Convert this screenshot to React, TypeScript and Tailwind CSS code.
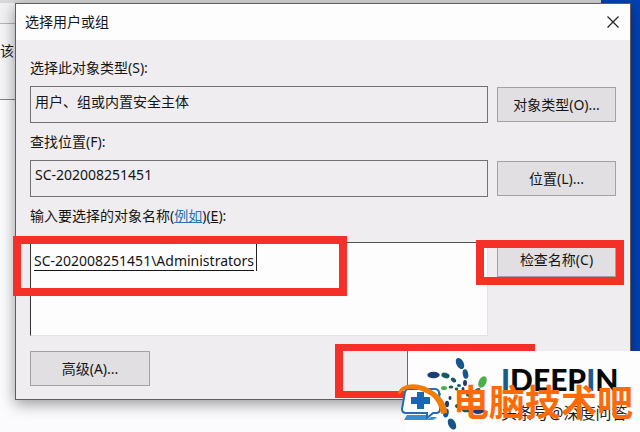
import { useState } from "react";

const BUTTON = "h-[35px] w-full border border-[#a3a1a3] bg-[#e1dfe1] text-sm leading-5 text-[#151515]";
const FIELD = "block h-[37px] w-full min-w-0 border border-[#737173] bg-[#efedef] px-1 pb-2 text-sm leading-5 text-[#151515] outline-none";

function FieldRow({ id, label, value, action }: { id: string; label: string; value: string; action: string }) {
  return (
    <div>
      <label htmlFor={id} className="block text-sm leading-5">{label}</label>
      <div className="mt-2 grid grid-cols-[1fr_119px] items-center gap-[9px]">
        <input id={id} type="text" readOnly value={value} className={FIELD} />
        <button type="button" className={BUTTON}>{action}</button>
      </div>
    </div>
  );
}

// red frame drawn round a control
function Mark({ className }: { className: string }) {
  return <div className={`pointer-events-none absolute border-[#f53029] ${className}`} />;
}

function CloseIcon() {
  return (
    <svg className="h-3 w-3" viewBox="0 0 12 12" fill="none" stroke="#222" strokeWidth={1.2}>
      <path d="M0.5 0.5 11.5 11.5M11.5 0.5 0.5 11.5" />
    </svg>
  );
}

function SwirlLogo() {
  return (
    <svg className="absolute left-[20px] top-[4px] h-[76px] w-[70px]" viewBox="0 0 70 76">
      <g fill="#17568b">
        <ellipse cx="33" cy="8.5" rx="3.6" ry="6" transform="rotate(-28 33 8.5)" />
        <ellipse cx="38.5" cy="19" rx="2.7" ry="4.8" transform="rotate(-10 38.5 19)" />
        <ellipse cx="38" cy="28" rx="2" ry="3" fill="#1c3c78" />
        <ellipse cx="36" cy="34" rx="1.5" ry="2" fill="#1c3c78" />
        <ellipse cx="25" cy="69" rx="3.6" ry="6" transform="rotate(-28 25 69)" />
        <ellipse cx="19" cy="58" rx="2.7" ry="4.6" transform="rotate(10 19 58)" />
        <ellipse cx="20" cy="49" rx="2" ry="3.2" fill="#1c3c78" />
        <ellipse cx="23" cy="43" rx="1.5" ry="2" fill="#1c3c78" />
      </g>
      <g fill="#1c3c78">
        <ellipse cx="6.5" cy="20" rx="6.2" ry="3.3" />
        <ellipse cx="18.5" cy="20.5" rx="4.2" ry="2.6" fill="#17575f" transform="rotate(18 18.5 20.5)" />
        <ellipse cx="26.5" cy="25" rx="3" ry="2" fill="#17575f" transform="rotate(35 26.5 25)" />
        <ellipse cx="32" cy="30.5" rx="2" ry="1.5" fill="#17575f" />
        <ellipse cx="51" cy="56" rx="6" ry="3" />
        <ellipse cx="39" cy="55" rx="4" ry="2.3" fill="#17575f" />
        <ellipse cx="31" cy="51" rx="3" ry="2" fill="#17575f" />
      </g>
      <g fill="#4daf4a">
        <ellipse cx="55.5" cy="27" rx="3.8" ry="6.2" transform="rotate(25 55.5 27)" />
        <ellipse cx="50" cy="36" rx="2.2" ry="4" transform="rotate(48 50 36)" fill="#2c7a4b" />
        <ellipse cx="42" cy="40" rx="3" ry="1.7" fill="#205c4c" />
        <ellipse cx="17" cy="33" rx="3" ry="2" />
        <ellipse cx="24" cy="32" rx="2.4" ry="1.6" fill="#205c4c" />
        <ellipse cx="29.5" cy="34" rx="1.8" ry="1.4" fill="#205c4c" />
        <ellipse cx="11" cy="39" rx="3" ry="2" />
      </g>
    </svg>
  );
}

function RepairIcon() {
  return (
    <svg className="absolute -left-[9px] top-[32px] h-[40px] w-[52px]" viewBox="0 0 52 40">
      <path d="M10 6h27q3 0 4 3l1 17q0 4-4 4h-3l-6 5v-5H8q-4 0-4-4L7 9q1-3 3-3Z" fill="#fff" stroke="#246cb5" strokeWidth="2" />
      <path d="M9 32h19v5l5-3h6q-2 3-6 3H6Z" fill="#368fd3" />
      <path d="M19 9h7v5h6v7h-6v5h-7v-5h-6v-7h6Z" fill="#1668b4" />
      <path d="M0 10C3 0 18-1 30 5c12 6 19 15 19 25l-6 1C41 20 36 13 26 9 16 5 7 4 2 11Z" fill="#f27c08" />
    </svg>
  );
}

function Watermark() {
  return (
    <div className="absolute bottom-0 right-0 h-[81px] w-[233px] bg-[#fdfdfe]">
      <div className="h-[42px] w-px bg-[#3674ad]" />
      <SwirlLogo />
      <p className="absolute left-[94px] top-[10px] font-['Lato',sans-serif] text-[30px] font-black leading-9 text-[#080808]">
        <span className="text-[#175d8c]">I</span>DEEP<span className="text-[#175d8c]">I</span>N
      </p>
      <p className="absolute left-[94px] top-[52px] whitespace-nowrap text-base leading-5 text-[#222]">头条号@深度问答</p>
      <RepairIcon />
      <p className="absolute left-[46px] top-[34px] whitespace-nowrap text-[36px] font-bold leading-9 text-[#ff6a08]">电脑技术吧</p>
    </div>
  );
}

export default function App() {
  const [names, setNames] = useState("SC-202008251451\\Administrators");

  return (
    <main className="relative grid min-h-screen grid-cols-[1fr_39px] overflow-hidden bg-[#fbfafc] font-['Noto_Sans','Noto_Sans_CJK_SC',sans-serif] text-sm text-[#151515]">
      <div className="col-start-1 row-start-1 border-t-[3px] border-[#d8d7d9]">
        <div className="h-[21px] border-b border-[#b5b3b5] bg-[#f1f0f2]" />
        <div className="h-[76px] border-b border-[#858385] bg-[#f5f4f6] pt-[17px] leading-5">该</div>
      </div>
      <div className="col-start-2 row-start-1 bg-[#0242b5]" />

      <section className="z-10 col-span-2 col-start-1 row-start-1 ml-[15px] mr-[9px] mt-[3px] self-start border border-[#5f5d5f] bg-[#efedef] shadow-[0_4px_14px_rgba(0,0,0,0.4)]">
        <header className="flex h-9 items-center justify-between bg-[#fefdfe] pb-px pl-[9px] pr-[11px]">
          <h1 className="text-sm leading-5">选择用户或组</h1>
          <button type="button" aria-label="关闭"><CloseIcon /></button>
        </header>

        <form className="px-[14px] pb-[13px] pt-[18px]" onSubmit={(e) => e.preventDefault()}>
          <div className="flex flex-col gap-[9px]">
            <FieldRow id="object-type" label="选择此对象类型(S):" value="用户、组或内置安全主体" action="对象类型(O)..." />
            <FieldRow id="location" label="查找位置(F):" value="SC-202008251451" action="位置(L)..." />
            <div className="leading-5">
              <label htmlFor="names">输入要选择的对象名称</label>(<a href="#example" className="text-[#2574b5] underline">例如</a>)(<u>E</u>):
            </div>
          </div>

          <div className="mt-4 grid grid-cols-[1fr_119px] gap-[9px]">
            <div className="relative">
              <textarea
                id="names"
                spellCheck={false}
                value={names}
                onChange={(e) => setNames(e.target.value)}
                className="block h-[94px] w-full resize-none border border-b-[#e5e3e5] border-l-[#333] border-r-[#e5e3e5] border-t-[#555] bg-[#fefdfe] px-[3px] py-2 text-sm leading-5 underline underline-offset-4 outline-none"
              />
              {/* text cursor */}
              <span className="pointer-events-none absolute left-[226px] top-px h-7 w-px bg-[#222]" />
              <Mark className="-left-[17px] -top-[6px] h-[60px] w-[334px] border-8" />
            </div>
            <div className="relative">
              <button type="button" className={BUTTON}>检查名称(C)</button>
              <Mark className="-left-[21px] -top-[2px] h-[45px] w-[148px] border-8" />
            </div>
          </div>

          <div className="relative mt-[15px] w-[120px]">
            <button type="button" className={BUTTON}>高级(A)...</button>
            <Mark className="-top-[7px] left-[305px] h-[54px] w-[200px] border-y-[7px] border-l-8" />
          </div>
        </form>
      </section>

      <div className="absolute bottom-0 right-0 z-20">
        <Watermark />
      </div>
    </main>
  );
}
